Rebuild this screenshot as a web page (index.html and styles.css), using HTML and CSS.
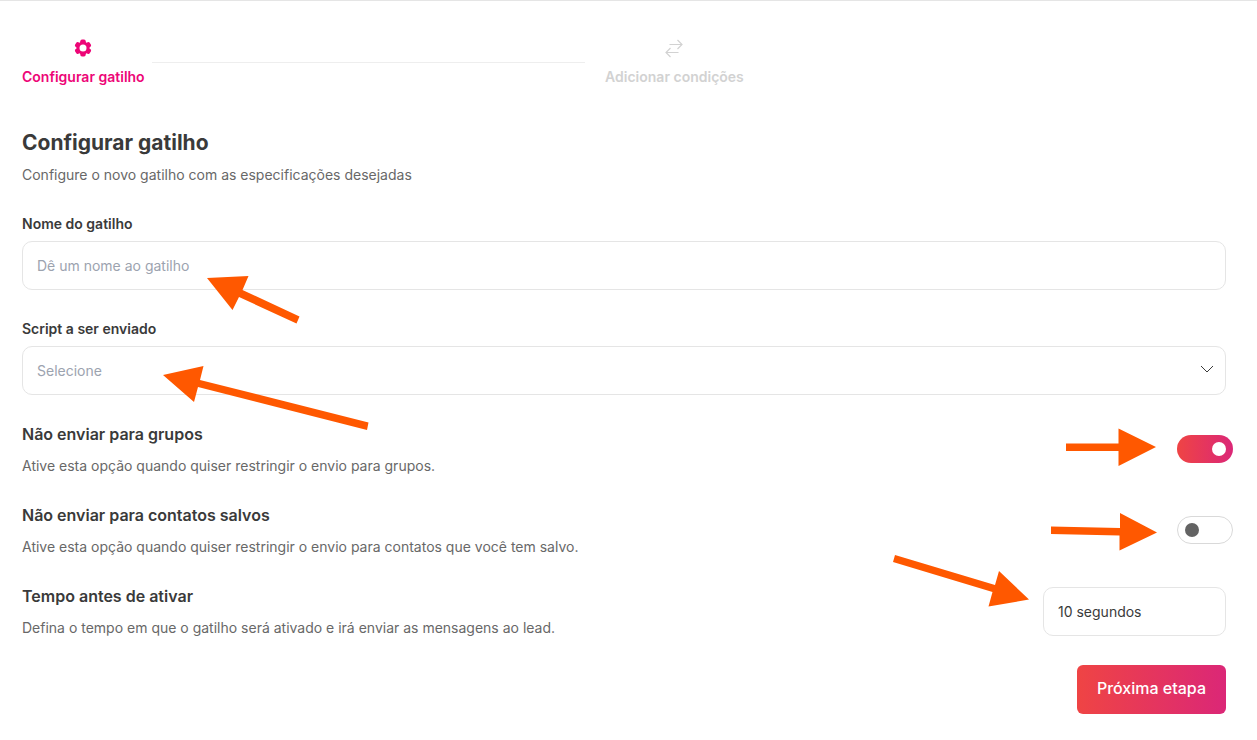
FILE: index.html
```html
<!DOCTYPE html>
<html lang="pt-BR">
<head>
    <meta charset="UTF-8">
    <meta name="viewport" content="width=device-width, initial-scale=1.0">
    <title>Configurar gatilho</title>
    <link rel="stylesheet" href="styles.css">
</head>
<body>
    <main class="page">
        <nav class="stepper">
            <div class="step active">
                <svg class="step-icon" viewBox="-10 -10 20 20" aria-hidden="true">
                    <g fill="currentColor">
                        <rect x="-2.700" y="-8.500" width="5.400" height="17" rx="1.700"/>
                        <rect x="-2.700" y="-8.500" width="5.400" height="17" rx="1.700" transform="rotate(60)"/>
                        <rect x="-2.700" y="-8.500" width="5.400" height="17" rx="1.700" transform="rotate(120)"/>
                        <circle r="6.500"/>
                    </g>
                    <circle r="3.500" fill="#FFFFFF"/>
                </svg>
                <span>Configurar gatilho</span>
            </div>
            <div class="step-line"></div>
            <div class="step">
                <svg class="step-icon" viewBox="0 0 20 20" aria-hidden="true">
                    <path fill="none" stroke="currentColor" stroke-width="1.200" d="M5.500 6.500h12.500M13.500 2l4.500 4.500-4.500 4.500M14.500 14.500H2M6.500 10L2 14.500 6.500 19"/>
                </svg>
                <span>Adicionar condições</span>
            </div>
        </nav>

        <form class="form">
            <h1>Configurar gatilho</h1>
            <p class="subtitle">Configure o novo gatilho com as especificações desejadas</p>

            <div class="field">
                <label for="nome">Nome do gatilho</label>
                <div class="control">
                    <input class="input" type="text" id="nome" placeholder="Dê um nome ao gatilho">
                    <svg class="arrow arrow-nome" width="94" height="49" viewBox="0 0 94 49" aria-hidden="true">
                        <path d="M1 3L42.500 1 36.500 15 93.500 41.500 90.500 48.500 33 22 26.500 35z"/>
                    </svg>
                </div>
            </div>

            <div class="field">
                <label for="script">Script a ser enviado</label>
                <div class="control">
                    <select class="input select" id="script">
                        <option>Selecione</option>
                    </select>
                    <svg class="chevron" viewBox="0 0 14 8" aria-hidden="true">
                        <path d="M1 1l6 6 6-6"/>
                    </svg>
                    <svg class="arrow arrow-script" width="207" height="66" viewBox="0 0 207 66" aria-hidden="true">
                        <path d="M1 10L41.500 1 38 15 206.500 57.500 205 65 36 22 32 37z"/>
                    </svg>
                </div>
            </div>

            <div class="option">
                <div class="option-text">
                    <label for="grupos">Não enviar para grupos</label>
                    <p>Ative esta opção quando quiser restringir o envio para grupos.</p>
                </div>
                <div class="control">
                    <input class="switch" type="checkbox" id="grupos" checked>
                    <svg class="arrow arrow-grupos" width="92" height="40" viewBox="0 0 92 40" aria-hidden="true">
                        <path d="M1 16.500H53.500V1.500L91 20 53.500 39V24H1z"/>
                    </svg>
                </div>
            </div>

            <div class="option">
                <div class="option-text">
                    <label for="salvos">Não enviar para contatos salvos</label>
                    <p>Ative esta opção quando quiser restringir o envio para contatos que você tem salvo.</p>
                </div>
                <div class="control">
                    <input class="switch" type="checkbox" id="salvos">
                    <svg class="arrow arrow-salvos" width="108" height="40" viewBox="0 0 108 40" aria-hidden="true">
                        <path d="M1 14.500L70 16V1L107 20.500 69.500 38.500V23.500L1 22z"/>
                    </svg>
                </div>
            </div>

            <div class="option">
                <div class="option-text">
                    <label for="tempo">Tempo antes de ativar</label>
                    <p>Defina o tempo em que o gatilho será ativado e irá enviar as mensagens ao lead.</p>
                </div>
                <div class="control time">
                    <input class="input" type="text" id="tempo" value="10 segundos">
                    <svg class="arrow arrow-tempo" width="138" height="54" viewBox="0 0 138 54" aria-hidden="true">
                        <path d="M3 1L103 31 107 17 137 45.500 96.500 52.500 100.500 38 1 8z"/>
                    </svg>
                </div>
            </div>

            <div class="actions">
                <button class="next-btn" type="button">Próxima etapa</button>
            </div>
        </form>
    </main>
</body>
</html>
```

FILE: styles.css
```css
:root {
    --pink: #ED0677;
    --gradient: linear-gradient(to right, #EF4444, #DB2777);
    --arrow: #FF5800;
    --border: #E5E5E5;
    --text: #3A3A3A;
    --text-light: #686868;
    --placeholder: #9CA3AF;
    --disabled: #D2D2D2;
}

* {
    box-sizing: border-box;
}

body {
    margin: 0;
    font-family: Inter, 'Liberation Sans', sans-serif;
    font-size: 14px;
    line-height: 20px;
    color: var(--text);
    background: #FFFFFF;
}

h1, p {
    margin: 0;
}

.page {
    border-top: 1px solid var(--border);
    padding: 37px 31px 26px 22px;
}

.stepper {
    display: flex;
    align-items: center;
}

.step {
    display: flex;
    flex-direction: column;
    align-items: center;
    gap: 9px;
    font-weight: 600;
    color: var(--disabled);
}

.step.active {
    color: var(--pink);
}

.step-icon {
    width: 20px;
    height: 20px;
}

.step-line {
    width: 36%;
    height: 1px;
    margin: 0 20px 0 7px;
    background: #EEEEEE;
}

.form {
    margin-top: 42px;
}

.form h1 {
    font-size: 21px;
    line-height: 28px;
    font-weight: 700;
}

.subtitle {
    margin-top: 8px;
    color: var(--text-light);
}

.field {
    margin-top: 29px;
}

.field label {
    display: block;
    margin-bottom: 7px;
    font-weight: 600;
}

.control {
    position: relative;
    display: flex;
}

.input {
    width: 100%;
    height: 49px;
    padding: 0 14px;
    border: 1px solid var(--border);
    border-radius: 10px;
    background: #FFFFFF;
    font: inherit;
    color: var(--text);
}

.input::placeholder {
    color: var(--placeholder);
    opacity: 1;
}

.select {
    appearance: none;
    color: var(--placeholder);
}

.chevron {
    position: absolute;
    top: 19px;
    right: 12px;
    width: 14px;
    height: 8px;
    fill: none;
    stroke: var(--text);
    pointer-events: none;
}

.option {
    display: flex;
    align-items: center;
    justify-content: space-between;
    margin-top: 27px;
}

.option-text label {
    display: block;
    margin-bottom: 10px;
    font-size: 16px;
    line-height: 24px;
    font-weight: 600;
}

.option-text p {
    color: var(--text-light);
}

.switch {
    appearance: none;
    display: flex;
    align-items: center;
    width: 56px;
    height: 28px;
    margin: 0 -7px 0 0;
    padding: 0 7px;
    border: 1px solid #D9D9D9;
    border-radius: 14px;
    background: #FFFFFF;
    cursor: pointer;
}

.switch::before {
    content: "";
    width: 14px;
    height: 14px;
    border-radius: 50%;
    background: #636363;
}

.switch:checked {
    justify-content: flex-end;
    border: none;
    background: var(--gradient);
}

.switch:checked::before {
    background: #FFFFFF;
}

.time {
    width: 183px;
}

.actions {
    display: flex;
    justify-content: flex-end;
    margin-top: 27px;
}

.next-btn {
    height: 49px;
    padding: 0 20px 3px;
    border: none;
    border-radius: 6px;
    background: var(--gradient);
    font-family: inherit;
    font-size: 16px;
    font-weight: 500;
    color: #FFFFFF;
    cursor: pointer;
}

/* Arrows pointing at each control */
.arrow {
    position: absolute;
    fill: var(--arrow);
    pointer-events: none;
}

.arrow-nome {
    top: 34px;
    left: 184px;
}

.arrow-script {
    top: 19px;
    left: 140px;
}

.arrow-grupos {
    top: -8px;
    right: 69px;
}

.arrow-salvos {
    top: -4px;
    right: 68px;
}

.arrow-tempo {
    top: -33px;
    right: 196px;
}
```
